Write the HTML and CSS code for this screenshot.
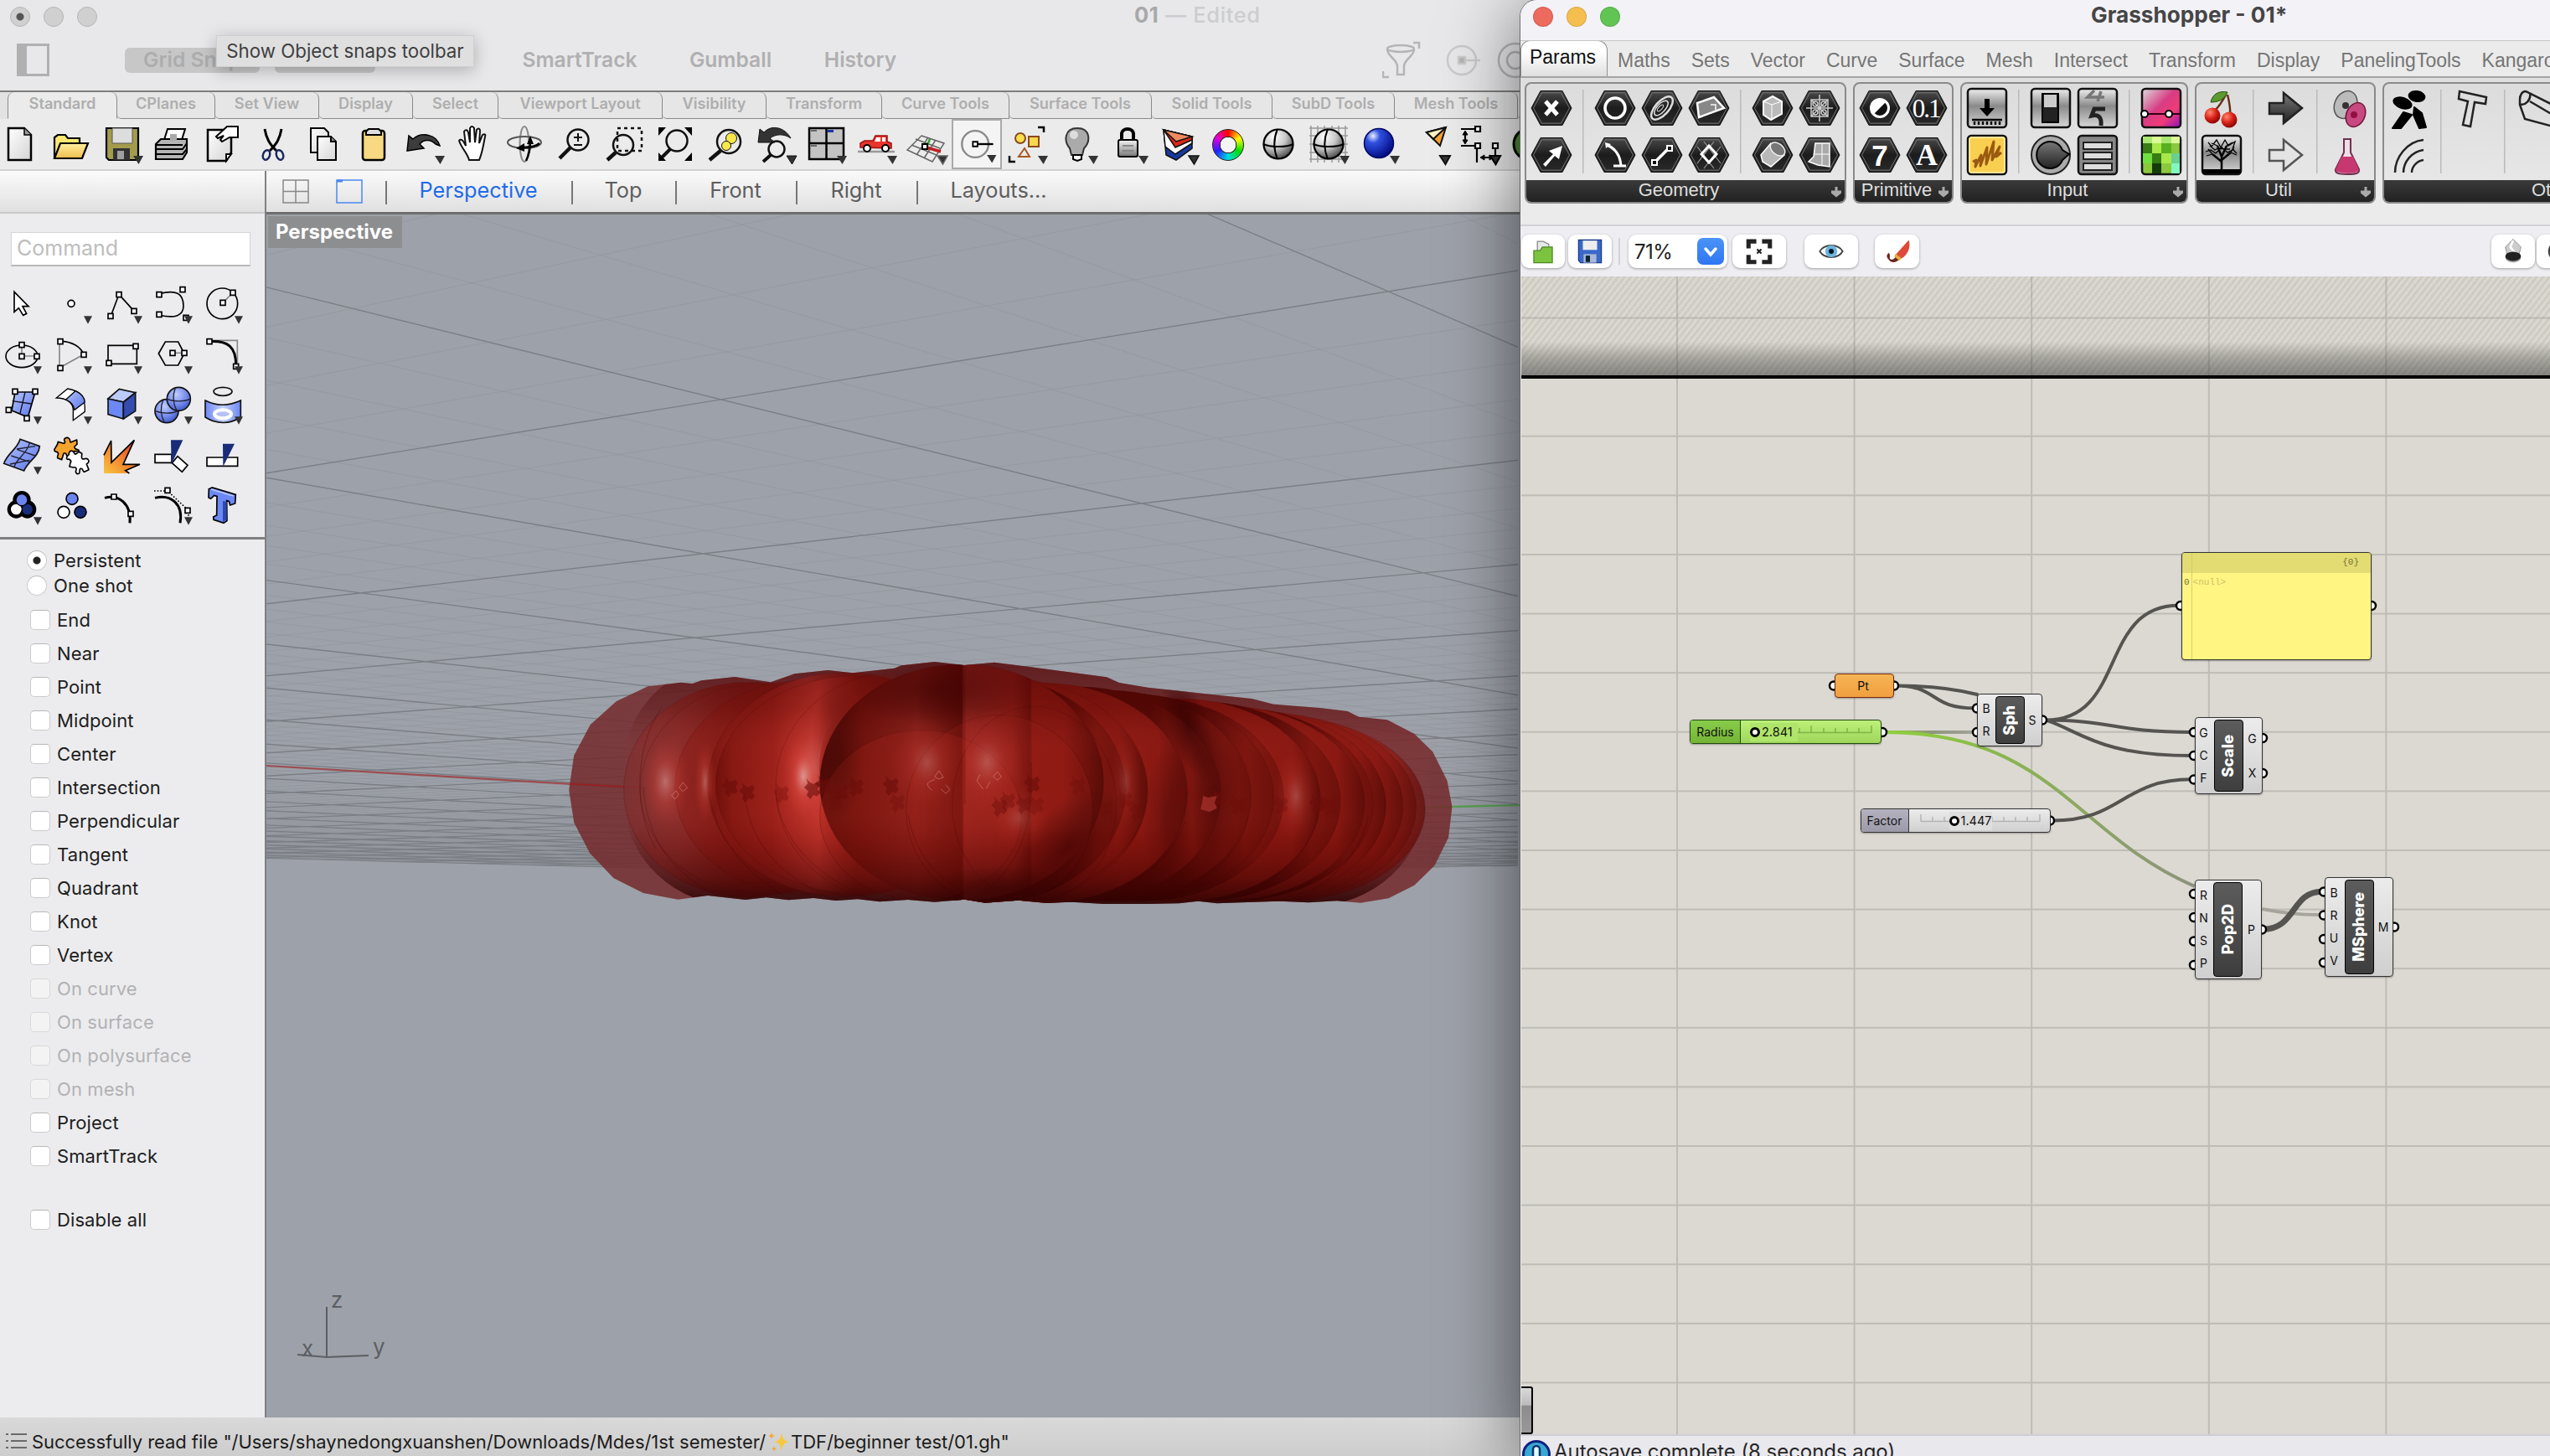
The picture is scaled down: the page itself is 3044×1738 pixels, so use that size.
FILE: index.html
```html
<!DOCTYPE html>
<html lang="en">
<head>
<meta charset="utf-8">
<title>01 — Edited</title>
<link rel="stylesheet" href="styles.css">
</head>
<body>
<svg class="defs" width="0" height="0">
  <defs>
    <linearGradient id="gHex" x1="0" y1="0" x2="0" y2="1"><stop offset="0" stop-color="#4a4a4a"/><stop offset=".5" stop-color="#1c1c1c"/><stop offset="1" stop-color="#2a2a2a"/></linearGradient>
    <linearGradient id="gPaper" x1="0" y1="0" x2="1" y2="1"><stop offset="0" stop-color="#fff"/><stop offset="1" stop-color="#d4d4d4"/></linearGradient>
    <linearGradient id="gSteel" x1="0" y1="0" x2="0" y2="1"><stop offset="0" stop-color="#f4f4f4"/><stop offset="1" stop-color="#777"/></linearGradient>
    <linearGradient id="gGrey" x1="0" y1="0" x2="0" y2="1"><stop offset="0" stop-color="#eee"/><stop offset=".45" stop-color="#8a8a8a"/><stop offset="1" stop-color="#d8d8d8"/></linearGradient>
    <linearGradient id="gDark" x1="0" y1="0" x2="0" y2="1"><stop offset="0" stop-color="#777"/><stop offset="1" stop-color="#222"/></linearGradient>
    <linearGradient id="gGold" x1="0" y1="0" x2="0" y2="1"><stop offset="0" stop-color="#fff0a0"/><stop offset="1" stop-color="#f0bc4c"/></linearGradient>
    <linearGradient id="gBlue" x1="0" y1="0" x2="1" y2="1"><stop offset="0" stop-color="#b4c4fa"/><stop offset="1" stop-color="#5a74ea"/></linearGradient>
    <linearGradient id="gBlue2" x1="0" y1="0" x2="1" y2="0"><stop offset="0" stop-color="#6c88f4"/><stop offset=".5" stop-color="#c4d0fb"/><stop offset="1" stop-color="#6c88f4"/></linearGradient>
    <linearGradient id="gFire" x1="0" y1="1" x2="1" y2="0"><stop offset="0" stop-color="#f9c33c"/><stop offset=".5" stop-color="#f08030"/><stop offset="1" stop-color="#e02818"/></linearGradient>
    <linearGradient id="gPink" x1="0" y1="0" x2="1" y2="1"><stop offset="0" stop-color="#ddd"/><stop offset=".45" stop-color="#d83c84"/><stop offset=".7" stop-color="#f03c78"/><stop offset="1" stop-color="#8a10c0"/></linearGradient>
    <radialGradient id="gBall" cx=".35" cy=".25" r=".8"><stop offset="0" stop-color="#fff"/><stop offset=".5" stop-color="#c8c8c8"/><stop offset="1" stop-color="#444"/></radialGradient>
    <radialGradient id="gBlueBall" cx=".3" cy=".25" r=".8"><stop offset="0" stop-color="#e8f0ff"/><stop offset=".3" stop-color="#3050e0"/><stop offset="1" stop-color="#000a80"/></radialGradient>
    <radialGradient id="gSoftBall" cx=".4" cy=".3" r=".8"><stop offset="0" stop-color="#c0ccfa"/><stop offset=".6" stop-color="#6c84ea"/><stop offset="1" stop-color="#3048b0"/></radialGradient>
    <radialGradient id="gCherry" cx=".35" cy=".3" r=".8"><stop offset="0" stop-color="#ff8870"/><stop offset=".5" stop-color="#d82018"/><stop offset="1" stop-color="#700"/></radialGradient>
    <symbol id="more" viewBox="0 0 60 60"><path d="M43 44h12l-5.500 10z" fill="#333"/></symbol>
    <symbol id="hex" viewBox="0 0 56 56"><path d="M4 28L15 7.500h26L52 28 41 48.500H15z" fill="url(#gHex)" stroke="#111" stroke-width="1"/><path d="M6.500 28L16.500 9.800h23L49.500 28 39.500 46.200h-23z" fill="none" stroke="#777" stroke-width="1"/></symbol>
    <symbol id="plus" viewBox="0 0 14 14"><path d="M5.500 1h3v4.500H13v3L7 13.500 1 8.500v-3h4.500z" fill="#aaa"/></symbol>
  </defs>
</svg>

<main class="rhino">
  <header class="r-title">
    <div class="lights off"><i class="dot"></i><i></i><i></i></div>
    <h1 class="doc"><b>01</b> — Edited</h1>
    <div class="r-tools">
      <svg class="side" viewBox="0 0 40 40"><path d="M1.500 1.500h36v36h-36z" fill="none" stroke="#b0b0b1" stroke-width="3"/><path d="M1 1h11v37H1z" fill="#b0b0b1"/></svg>
      <span class="opt on gs">Grid Snap</span><span class="opt on or">Ortho</span><span class="opt pl">Planar</span><span class="opt st">SmartTrack</span><span class="opt gu">Gumball</span><span class="opt hi">History</span>
      <svg class="filters" viewBox="0 0 180 46" fill="none" stroke="#b5b5b6" stroke-width="2.500"><ellipse cx="22" cy="9" rx="16" ry="4"/><path d="M6 10c0 8 12 12 12 20v10h8V30c0-8 12-12 12-20M37 2h7v7M1 36v7h7"/><g stroke="#cacacb"><circle cx="95" cy="23" r="17"/><path d="M95 23h22"/><path d="M91 19h8v8h-8z" fill="#b5b5b6"/></g><circle cx="159" cy="23" r="20"/><circle cx="159" cy="23" r="10"/></svg>
    </div>
    <div class="tooltip">Show Object snaps toolbar</div>
  </header>

  <nav class="r-tabs">
    <span class="act" style="width:131px">Standard</span><span style="width:117px">CPlanes</span><span style="width:124px">Set View</span><span style="width:112px">Display</span><span style="width:102px">Select</span><span style="width:196px">Viewport Layout</span><span style="width:124px">Visibility</span><span style="width:138px">Transform</span><span style="width:152px">Curve Tools</span><span style="width:170px">Surface Tools</span><span style="width:144px">Solid Tools</span><span style="width:146px">SubD Tools</span><span style="width:147px">Mesh Tools</span><span style="width:147px"></span>
  </nav>

  <div class="r-icons">
    <svg viewBox="0 0 60 60"><path d="M14 11h19l8 8v30H14z" fill="url(#gPaper)" stroke="#000" stroke-width="2.500"/><path d="M33 11v8h8" fill="#999" stroke="#000" stroke-width="1.500"/></svg>
    <svg viewBox="0 0 60 60"><path d="M9 47V22l4-3h9l3 4h14v6" fill="#fbe870" stroke="#000" stroke-width="2.200"/><path d="M9 47l7-18h33l-7 18z" fill="url(#gGold)" stroke="#000" stroke-width="2.200"/></svg>
    <svg viewBox="0 0 60 60"><path d="M11 11h38v38H14l-3-3z" fill="#a39c4c" stroke="#000" stroke-width="2.200"/><path d="M18 11h24v18H18z" fill="#ddd" stroke="#555"/><path d="M19 35h20v14H19z" fill="#333"/><path d="M24 38h8v10h-8z" fill="#a0a0a0"/><use href="#more"/></svg>
    <svg viewBox="0 0 60 60"><path d="M19 28l5-16h21l-5 16" fill="#fff" stroke="#000" stroke-width="2"/><path d="M10 30l6-6h31v16l-5 8H10z" fill="#b5b5b5" stroke="#000" stroke-width="2.200"/><path d="M10 36h32l5-7M10 42h32l5-6M10 31h32" stroke="#000" stroke-width="2" fill="none"/><path d="M27 18h8v8h-8z" fill="#aaa"/></svg>
    <svg viewBox="0 0 60 60"><path d="M12 13h28v27l-6 10H12z" fill="url(#gPaper)" stroke="#000" stroke-width="2.500"/><path d="M40 42l-6 8V42z" fill="#fff" stroke="#000" stroke-width="2"/><path d="M48 9H35l-13 12 2 2 7-3-4 5 2 2 9-5h10z" fill="#fff" stroke="#000" stroke-width="2"/></svg>
    <svg viewBox="0 0 60 60" fill="none"><path d="M20 12c2 12 6 18 14 26M40 12c-2 12-6 18-14 26" stroke="#000" stroke-width="3"/><ellipse cx="22" cy="43" rx="4" ry="6" stroke="#1a2a5c" stroke-width="2.500" transform="rotate(20 22 43)"/><ellipse cx="38" cy="43" rx="4" ry="6" stroke="#1a2a5c" stroke-width="2.500" transform="rotate(-20 38 43)"/></svg>
    <svg viewBox="0 0 60 60" fill="url(#gPaper)" stroke="#000" stroke-width="2"><path d="M15 11h16l5 5v24H15z"/><path d="M23 21h16l6 6v22H23z"/><path d="M39 21v6h6" fill="#888"/></svg>
    <svg viewBox="0 0 60 60"><rect x="17" y="14" width="26" height="35" rx="3" fill="#f8d880" stroke="#000" stroke-width="2.500"/><path d="M21 19v-4l3-3h12l3 3v4z" fill="#ddd" stroke="#000" stroke-width="2"/></svg>
    <svg viewBox="0 0 60 60"><path d="M10 38l2-18 5 4c10-9 28-6 32 8l-5-2c-6-6-14-6-19 0l5 5z" fill="#3c3c3c" stroke="#000" stroke-width="1.500"/><use href="#more"/></svg>
    <svg viewBox="0 0 60 60"><path d="M24 49c-2-8-9-14-12-23 2-3 5-1 8 6l-2-17c2-3 4-2 5 1l2 12V11c2-3 4-2 5 0l1 17 2-15c2-3 4-1 4 1l-1 15 4-10c3-2 4 0 3 2-2 10-3 19-7 28z" fill="#fff" stroke="#111" stroke-width="2"/></svg>
    <svg viewBox="0 0 60 60" fill="none"><ellipse cx="30" cy="30" rx="5.500" ry="21" stroke="#888" stroke-width="2"/><ellipse cx="30" cy="28" rx="20" ry="7" stroke="#555" stroke-width="2"/><path d="M20 35l10-6v10z M33 30l4-10 4 10z" fill="#000"/><path d="M28 34c10 0 16-1 20-5M37 26c0 10-2 18-5 24" stroke="#000" stroke-width="2.500"/></svg>
    <svg viewBox="0 0 60 60" fill="none" stroke="#111"><circle cx="34" cy="25" r="12.500" stroke-width="2.500"/><path d="M25 34L12 47" stroke-width="4.500"/><path d="M29 22h10M34 17v10M29 31h10" stroke-width="2"/></svg>
    <svg viewBox="0 0 60 60" fill="none" stroke="#111"><path d="M21 11h29v27H21z" stroke-width="2.500" stroke-dasharray="4 4"/><circle cx="28" cy="31" r="12" stroke-width="2.500"/><path d="M19 40L9 49" stroke-width="4.500"/></svg>
    <svg viewBox="0 0 60 60" fill="none" stroke="#111"><circle cx="32" cy="26" r="12.500" stroke-width="2.500"/><path d="M24 36L14 46" stroke-width="4"/><path d="M10 10h9l-9 10zM50 10h-9l9 10zM10 50h9l-9-10zM50 50h-9l9-10z" fill="#000" stroke="none"/></svg>
    <svg viewBox="0 0 60 60" fill="none" stroke="#111"><circle cx="34" cy="27" r="14" stroke-width="2.500"/><path d="M24 38L11 49" stroke-width="4.500"/><circle cx="37" cy="23" r="6.500" fill="#f8e84c"/><circle cx="31" cy="32" r="5.500" fill="#f8e84c"/></svg>
    <svg viewBox="0 0 60 60" fill="none" stroke="#111"><path d="M9 28l2-16 5 4c9-10 25-6 32 7-9-6-18-5-25 0l6 5z" fill="#333"/><circle cx="31" cy="36" r="9.500" stroke-width="2.500"/><path d="M24 43l-9 8" stroke-width="4"/><use href="#more"/></svg>
    <svg viewBox="0 0 60 60"><path d="M10 11h41v37H10zM30.500 11v37M10 29h41" fill="#c3c3c3" stroke="#000" stroke-width="2.500"/><path d="M32 13h7v3h-7z" fill="#1838a8"/><path d="M12 13h7v2h-7zM12 31h7v2h-7z" fill="#666"/><use href="#more"/></svg>
    <svg viewBox="0 0 60 60"><path d="M8 39h44" stroke="#999" stroke-width="2.500"/><path d="M11 34v-5l5-3h10l3-6h14v7l5 2v6z" fill="#e8352c" stroke="#a01010" stroke-width="1.500"/><path d="M30 22h5v5h-7zM37 22h4v5h-4z" fill="#fff"/><circle cx="19" cy="35" r="4" fill="#fff" stroke="#000" stroke-width="2"/><circle cx="41" cy="35" r="4" fill="#fff" stroke="#000" stroke-width="2"/><use href="#more"/></svg>
    <svg viewBox="0 0 60 60" fill="none" stroke="#666" stroke-width="1.500"><path d="M24 20l27 9-14 22-30-14zM17 24l29 11M12 31l30 12M32 22L18 43M41 25L27 47"/><path d="M30 34l4-10" stroke="#30a030" stroke-width="2.500"/><path d="M30 34l17 5" stroke="#c02020" stroke-width="3.500"/><path d="M25 30h6v6h-6z" fill="#fff" stroke="#000" stroke-width="2"/><use href="#more"/></svg>
    <svg class="pressed" viewBox="0 0 60 60" fill="none"><circle cx="28" cy="30" r="17" stroke="#888" stroke-width="2.500"/><path d="M31 30h20" stroke="#000" stroke-width="2.500"/><path d="M25 27h6v6h-6z" fill="#fff" stroke="#000" stroke-width="2"/><use href="#more"/></svg>
    <svg viewBox="0 0 60 60" fill="none"><circle cx="22" cy="23" r="6" fill="#f8e04c" stroke="#8a4a20" stroke-width="2"/><path d="M32 21h12v12H32z" fill="#f8d84c" stroke="#8a4a20" stroke-width="2"/><path d="M27 35l6 10H20z" stroke="#a85820" stroke-width="2"/><path d="M43 10h7v6M9 44v7h7" stroke="#000" stroke-width="2.500"/><use href="#more"/></svg>
    <svg viewBox="0 0 60 60"><path d="M30 11c-16 0-16 16-9 24l2 8h13l2-8c8-8 8-24-8-24z" fill="#aaa" stroke="#333" stroke-width="2"/><ellipse cx="26" cy="19" rx="5" ry="5" fill="#ddd"/><path d="M25 43h10v5l-5 2-5-2z" fill="#fff" stroke="#000" stroke-width="2"/><use href="#more"/></svg>
    <svg viewBox="0 0 60 60"><path d="M23 26v-8c0-8 14-8 14 0v8" fill="none" stroke="#000" stroke-width="4"/><rect x="19" y="25" width="23" height="20" rx="2" fill="url(#gSteel)" stroke="#000" stroke-width="2"/><path d="M24 32h13M24 38h13" stroke="#888" stroke-width="2"/><use href="#more"/></svg>
    <svg viewBox="0 0 60 60" stroke="#111" stroke-width="1.500"><path d="M13 13l34 8v14L28 49 16 43z" fill="#1838a0"/><path d="M13 13l34 8v8L27 42l-12-9z" fill="#fff"/><path d="M13 13l34 8v4L27 34z" fill="#d82818"/><path d="M13 13l34 8-19 6z" fill="#f08a60"/><use href="#more"/></svg>
    <span class="wheel"><i></i></span>
    <svg viewBox="0 0 60 60"><circle cx="30" cy="30" r="17.500" fill="url(#gBall)" stroke="#000" stroke-width="2.200"/><path d="M29 12c-5 12-5 24 0 36M12 30c8 4 28 4 36 0" fill="none" stroke="#000" stroke-width="2"/></svg>
    <svg viewBox="0 0 60 60"><path d="M9 8v44M17 8v44M25 8v44M34 8v44M42 8v44M50 8v44M7 11h46M7 20h46M7 30h46M7 40h46M7 48h46" stroke="#999" stroke-width="1.500"/><circle cx="30" cy="30" r="17.500" fill="url(#gBall)" stroke="#000" stroke-width="2.200"/><path d="M29 12c-5 12-5 24 0 36M12 30c8 4 28 4 36 0" fill="none" stroke="#000" stroke-width="2"/><use href="#more"/></svg>
    <svg viewBox="0 0 60 60"><circle cx="30" cy="29" r="17.500" fill="url(#gBlueBall)" stroke="#000860" stroke-width="1.500"/><use href="#more"/></svg>
    <svg viewBox="0 0 60 60" stroke="#111" stroke-width="2"><path d="M27 16l23-6-7 22z" fill="#f8a030"/><path d="M27 16l23-6-15 14z" fill="#fff3c0"/><use href="#more"/></svg>
    <svg viewBox="0 0 60 60" fill="none" stroke="#000" stroke-width="2.200"><path d="M8 12h20M8 32h20M13 16v12M27 36v16M49 36v16M33 46h12"/><path d="M10 19l3-5 3 5zM10 25l3 5 3-5zM36 43l-5 3 5 3zM42 43l5 3-5 3z" fill="#000" stroke-width="1"/><path d="M25 9h6v6h-6zM25 29h6v6h-6zM46 29h6v6h-6z" fill="#fff"/><use href="#more"/></svg>
    <svg viewBox="0 0 60 60"><circle cx="30" cy="30" r="19" fill="#4a8a30" stroke="#000" stroke-width="3"/></svg>
  </div>

  <div class="r-work">
    <aside class="r-left">
      <div class="left-cap"></div>
      <div class="command">Command</div>
      <div class="palette">
        <svg viewBox="-12 248 180 180"><path d="M51 297v72l16-14 16 26 12-6-14-26h21z" fill="#fff" stroke="#000" stroke-width="5"/></svg>
        <svg viewBox="168 248 180 180"><circle cx="255" cy="339" r="12" fill="#fff" stroke="#000" stroke-width="5"/><path d="M300 384h30l-15 28z" fill="#333"/></svg>
        <svg viewBox="348 248 180 180" fill="#fff" stroke="#000" stroke-width="5"><path d="M397 384l29-78 54 60" fill="none"/><path d="M387 375h18v18h-18zM417 298h18v18h-18zM471 357h18v18h-18z"/><path d="M480 384h30l-15 28z" fill="#333" stroke="none"/></svg>
        <svg viewBox="528 248 180 180" fill="#fff" stroke="#000" stroke-width="5"><path d="M570 304c60-16 87-2 87 44 0 34-30 46-87 32" fill="none"/><path d="M561 298h18v18h-18zM561 369h18v18h-18zM645 280h18v18h-18zM657 381h18v18h-18z"/><path d="M660 384h30l-15 28z" fill="#333" stroke="none"/></svg>
        <svg viewBox="708 248 180 180" fill="#fff" stroke="#000" stroke-width="5"><circle cx="796" cy="339" r="55" fill="none"/><path d="M798 336l36-36" stroke="#888"/><path d="M789 327h18v18h-18zM825 291h18v18h-18z"/><path d="M840 384h30l-15 28z" fill="#333" stroke="none"/></svg>

        <svg viewBox="-12 428 180 180" fill="#fff" stroke="#000" stroke-width="5"><ellipse cx="78" cy="528" rx="57" ry="40" fill="none"/><path d="M78 487v40h54" fill="none" stroke="#888"/><path d="M69 478h18v18H69zM69 519h18v18H69zM123 519h18v18h-18z"/><path d="M120 564h30l-15 28z" fill="#333" stroke="none"/></svg>
        <svg viewBox="168 428 180 180" fill="#fff" stroke="#000" stroke-width="5"><path d="M300 521l-87 48v-94" fill="none" stroke="#888"/><path d="M216 474c40 0 74 20 84 48" fill="none"/><path d="M207 466h18v18h-18zM291 513h18v18h-18zM207 561h18v18h-18z"/><path d="M300 564h30l-15 28z" fill="#333" stroke="none"/></svg>
        <svg viewBox="348 428 180 180" fill="#fff" stroke="#000" stroke-width="5"><path d="M387 489h103v66H387z" fill="none"/><path d="M477 483h18v18h-18zM381 543h18v18h-18z"/><path d="M480 564h30l-15 28z" fill="#333" stroke="none"/></svg>
        <svg viewBox="528 428 180 180" fill="#fff" stroke="#000" stroke-width="5"><path d="M568 518l24-42h46l22 42-22 42h-46z" fill="none"/><path d="M618 516h42" stroke="#888"/><path d="M609 507h18v18h-18zM651 507h18v18h-18z"/><path d="M660 564h30l-15 28z" fill="#333" stroke="none"/></svg>
        <svg viewBox="708 428 180 180" fill="#fff" stroke="#000" stroke-width="5"><path d="M750 471h100v80" fill="none" stroke="#888"/><path d="M750 475c66-4 96 18 95 88" fill="none" stroke-width="9"/><path d="M741 466h18v18h-18zM836 555h18v18h-18z"/><path d="M840 564h30l-15 28z" fill="#333" stroke="none"/></svg>

        <svg viewBox="-12 608 180 180" fill="#fff" stroke="#000" stroke-width="5"><path d="M54 656h72l-26 90-58-24z" fill="url(#gBlue)"/><path d="M90 656L72 732M44 688l68 10" stroke="#112" stroke-width="4"/><path d="M45 645h18v18H45zM117 645h18v18h-18zM22 711h18v18H22zM87 741h18v18H87z"/><path d="M120 744h30l-15 28z" fill="#333" stroke="none"/></svg>
        <svg viewBox="168 608 180 180" fill="#fff" stroke="#000" stroke-width="4"><path d="M202 677l40-33c46 8 64 26 62 82l-42 31v-38c0-22-22-42-60-42z"/><path d="M236 683l34-31c18 8 32 20 34 40l-37 28c-4-20-14-30-31-37z" fill="url(#gBlue)"/><path d="M300 744h30l-15 28z" fill="#333" stroke="none"/></svg>
        <svg viewBox="348 608 180 180" stroke="#111" stroke-width="5"><path d="M387 680l40-35 58 13-43 34z" fill="#bccaf8"/><path d="M387 680l55 12v60l-55-16z" fill="#6c88f4"/><path d="M442 692l43-34v66l-43 28z" fill="#344cb0"/><path d="M480 744h30l-15 28z" fill="#333" stroke="none"/></svg>
        <svg viewBox="528 608 180 180" stroke="#111" stroke-width="5"><circle cx="597" cy="724" r="42" fill="url(#gSoftBall)"/><path d="M584 684c-10 26-8 56 4 80M556 724c24 10 60 10 82 0" fill="none" stroke="#223" stroke-width="4"/><circle cx="640" cy="681" r="42" fill="url(#gSoftBall)"/><path d="M628 641c-10 26-8 56 4 80M598 681c24 10 60 10 84 0" fill="none" stroke="#223" stroke-width="4"/><path d="M660 744h30l-15 28z" fill="#333" stroke="none"/></svg>
        <svg viewBox="708 608 180 180" stroke="#111" stroke-width="5"><ellipse cx="798" cy="654" rx="33" ry="15" fill="none"/><path d="M735 686c40 20 86 20 127 0v60c-40 26-86 26-127 0z" fill="url(#gBlue2)"/><ellipse cx="798" cy="735" rx="30" ry="15" fill="#b4c2f6" stroke="#fff" stroke-width="12"/><path d="M840 744h30l-15 28z" fill="#333" stroke="none"/></svg>

        <svg viewBox="-12 788 180 180" stroke="#111" stroke-width="5"><path d="M72 825l70 25c-4 40-40 50-56 88l-72-26c12-38 48-50 58-87z" fill="url(#gBlue)"/><path d="M62 862l64 22M40 884l66 22M106 838c-8 40-44 50-56 88M126 850l-66 10M106 900l-70 14" fill="none" stroke="#223" stroke-width="4"/><path d="M120 924h30l-15 28z" fill="#333" stroke="none"/></svg>
        <svg viewBox="168 788 180 180" stroke="#000" stroke-width="5" stroke-linejoin="round"><path d="M208 834l17 5c7 2 10-3 6-8-5-9 8-15 16-9 7 5 1 11 6 14l22-9 1 16c-8 5-12 11-7 15 6 6 12 1 14 8-12 4-24-1-28 8-4 7 4 10 0 16-8 6-16-4-18-12-4-6-9-4-10 1l-6 19-15-6c-3-7 6-12 2-18-4-7-14-2-13-10-2-8 12-14 13-30z" fill="#f4a32c"/><path d="M247 880c-2-10 6-16 14-12 6 3 4 12 10 10l12-8 10 6c2 6-4 12 1 18 6 6 12-4 20 2 8 8 2 14-4 18l8 20-16 8c-8-2-4-14-13-12-8 3 0 12-6 18-10 4-14-6-10-14 2-8-4-10-10-8l-14-3 3-14c6-6-3-14-9-12-8 0-4-12 4-17z" fill="#fff"/></svg>
        <svg viewBox="348 788 180 180"><path d="M372 947V882l26-54 2 80 80-80-38 88 58 0-48 22 12 9z" fill="url(#gFire)"/><path d="M372 882l26-52 1 78 82-80-40 87 60 0-52 22 14 10" fill="none" stroke="#000" stroke-width="5"/></svg>
        <svg viewBox="528 788 180 180"><path d="M555 879h60v30h-60zM636 886l36 32-20 24-36-32z" fill="#fff" stroke="#000" stroke-width="5"/><path d="M612 828h43l-41 86z" fill="#182c78"/></svg>
        <svg viewBox="708 788 180 180"><path d="M741 890h110v31H741z" fill="#fff" stroke="#000" stroke-width="5"/><path d="M798 841h42l-41 82z" fill="#182c78"/></svg>

        <svg viewBox="-12 968 180 180" stroke="#000"><g stroke-width="18"><circle cx="78" cy="1042" r="23"/><circle cx="58" cy="1076" r="23"/><circle cx="98" cy="1076" r="23"/></g><g stroke-width="4"><circle cx="98" cy="1076" r="21" fill="#182c78"/><circle cx="58" cy="1076" r="21" fill="#fff"/><circle cx="78" cy="1042" r="21" fill="#6c84ee"/></g><path d="M120 1104h30l-15 28z" fill="#333" stroke="none"/></svg>
        <svg viewBox="168 968 180 180" stroke="#000" stroke-width="5"><circle cx="258" cy="1038" r="21" fill="#6c84ee"/><circle cx="228" cy="1086" r="21" fill="#fff"/><circle cx="288" cy="1086" r="21" fill="#182c78"/></svg>
        <svg viewBox="348 968 180 180" fill="none" stroke="#000"><path d="M375 1035c50-14 96 20 90 90" stroke-width="9"/><path d="M399 1022h18v18h-18zM459 1083h18v18h-18z" fill="#fff" stroke-width="5"/></svg>
        <svg viewBox="528 968 180 180" fill="none" stroke="#000"><path d="M555 1035c56-14 102 20 90 90" stroke-width="9"/><path d="M552 1010h48l75 70v30" stroke-width="5" stroke-dasharray="5 6"/><path d="M591 999h18v18h-18zM663 1071h18v18h-18z" fill="#fff" stroke-width="5"/><path d="M660 1104h30l-15 28z" fill="#333" stroke="none"/></svg>
        <svg viewBox="708 968 180 180" stroke="#000" stroke-width="5"><path d="M748 1003l12-5 84 25-2 32-18 6-4-14-8-2 1 72-12 8-36-12-1-10 12-6 1-68-10-3-12 12-8-4z" fill="#6c88f4"/><path d="M756 1004l80 24" stroke="#b8c8fa" stroke-width="5" fill="none"/><path d="M798 1046l14 3v64l-14 8z" fill="#2c48b0" stroke="none"/></svg>
      </div>
      <section class="snaps">
        <label class="radio sel"><i></i>Persistent</label>
        <label class="radio"><i></i>One shot</label>
        <div class="checks">
          <label><i></i>End</label><label><i></i>Near</label><label><i></i>Point</label><label><i></i>Midpoint</label><label><i></i>Center</label><label><i></i>Intersection</label><label><i></i>Perpendicular</label><label><i></i>Tangent</label><label><i></i>Quadrant</label><label><i></i>Knot</label><label><i></i>Vertex</label>
          <label class="dim"><i></i>On curve</label><label class="dim"><i></i>On surface</label><label class="dim"><i></i>On polysurface</label><label class="dim"><i></i>On mesh</label>
          <label><i></i>Project</label><label><i></i>SmartTrack</label>
          <label class="all"><i></i>Disable all</label>
        </div>
      </section>
    </aside>

    <section class="r-view">
      <div class="v-bar">
        <svg class="v4" viewBox="0 0 32 30" fill="none" stroke="#888" stroke-width="1.500"><path d="M1 1h30v27H1zM16 1v27M1 14.500h30"/></svg>
        <svg class="v1" viewBox="0 0 32 30" fill="none" stroke="#4a88f0" stroke-width="1.500"><path d="M1 1h30v27H1z"/><path d="M1 2h7" stroke-width="3"/></svg>
        <hr><span class="cur">Perspective</span><hr><span>Top</span><hr><span>Front</span><hr><span>Right</span><hr><span>Layouts...</span>
      </div>
      <div class="scene">
        <svg class="scene-svg" viewBox="318 256 1500 1436">
          <defs>
            <clipPath id="ground"><path d="M318 200H1818V1034L1084 1044.600 318 1025z"/></clipPath>
            <clipPath id="hull"><path d="M52 548L60 425 86 315 127 232 177 178 230 164 248 168 262 157 315 144 372 163 410 133 463 120 502 130 568 113 580 103 632 90 679 102 727 92 780 107 845 127 905 145 925 165 970 182 1020 194 1075 208 1135 222 1170 242 1243 255 1287 267 1305 287 1350 298 1393 348 1422 412 1445 515 1453 610 1447 720 1425 820 1393 890 1352 937 1308 953 1270 946 1225 952 1180 947 1080 955 1050 947 1020 955 970 957 900 957 850 950 810 954 765 944 712 953 680 941 632 950 590 942 545 949 510 940 475 945 440 936 400 943 365 934 332 942 272 927 225 941 170 918 123 865 85 775 60 665z"/></clipPath>
            <linearGradient id="sR"><stop offset="0" stop-color="#7c150e"/><stop offset=".78" stop-color="#8e1a12"/><stop offset=".9" stop-color="#8a1811"/><stop offset="1" stop-color="#5c0c07"/></linearGradient>
            <linearGradient id="sR2"><stop offset="0" stop-color="#5a0c07"/><stop offset=".75" stop-color="#560a06"/><stop offset=".9" stop-color="#7c150e"/><stop offset="1" stop-color="#6a0f0a"/></linearGradient>
            <linearGradient id="sL"><stop offset="0" stop-color="#6e0f0a"/><stop offset=".06" stop-color="#861812"/><stop offset=".2" stop-color="#9c2019"/><stop offset=".36" stop-color="#c8382f"/><stop offset=".5" stop-color="#8c1a13"/></linearGradient>
            <linearGradient id="sLL"><stop offset="0" stop-color="#7a3030"/><stop offset=".15" stop-color="#8f302d"/><stop offset=".4" stop-color="#821a15"/></linearGradient>
            <linearGradient id="sM"><stop offset="0" stop-color="#4e0905"/><stop offset=".15" stop-color="#6c110b"/><stop offset=".34" stop-color="#86201a"/><stop offset=".5" stop-color="#5c0c07"/><stop offset=".51" stop-color="#9c2a24"/><stop offset=".68" stop-color="#8e1e17"/><stop offset=".74" stop-color="#6e110b"/><stop offset=".75" stop-color="#8c1a12"/><stop offset=".86" stop-color="#8a1811"/><stop offset="1" stop-color="#560a06"/></linearGradient>
            <linearGradient id="sV" x1="0" y1="0" x2="0" y2="1"><stop offset="0" stop-color="#400" stop-opacity=".5"/><stop offset=".2" stop-color="#400" stop-opacity=".25"/><stop offset=".4" stop-color="#a33" stop-opacity=".04"/><stop offset=".6" stop-color="#a33" stop-opacity=".04"/><stop offset=".72" stop-color="#500" stop-opacity=".15"/><stop offset=".88" stop-color="#380000" stop-opacity=".5"/><stop offset="1" stop-color="#200" stop-opacity=".85"/></linearGradient>
            <radialGradient id="glow"><stop offset="0" stop-color="#e8aca8" stop-opacity=".8"/><stop offset=".45" stop-color="#d84a42" stop-opacity=".5"/><stop offset="1" stop-color="#c03028" stop-opacity="0"/></radialGradient>
            <radialGradient id="shade"><stop offset="0" stop-color="#2a0000" stop-opacity=".75"/><stop offset="1" stop-color="#2a0000" stop-opacity="0"/></radialGradient>
            <clipPath id="lobeL"><path d="M449 480C449 340 480 230 530 170V100H280V950H560V880C480 800 452 640 449 480z"/></clipPath>
            <clipPath id="lobeR"><path d="M680 100H900V960H680z"/></clipPath>
          </defs>
          <g clip-path="url(#ground)" fill="none">
            <path id="minor" stroke="#8f949b" stroke-width="1" stroke-opacity=".55"/>
            <path id="major" stroke="#7b7f85" stroke-width="1.400"/>
          </g>
          <path d="M318 914L1334 975" stroke="#9c4c50" stroke-width="2.200"/>
          <path d="M1334 973L1818 961" stroke="#58a050" stroke-width="2.200"/>
          <g transform="translate(640 760) scale(.7526 .3333)">
            <g clip-path="url(#hull)">
              <path d="M0 50h1500v950H0z" fill="#742a2c" fill-opacity=".86"/>
              <path d="M0 521l270 30" stroke="#a81c1c" stroke-width="3"/>
              <g stroke="#4a0a0a" stroke-opacity=".25" stroke-width="1.500">
                <ellipse cx="1180" cy="618" rx="230" ry="332" fill="url(#sR)" fill-opacity=".75"/>
                <ellipse cx="1166" cy="612" rx="230" ry="336" fill="url(#sR)" fill-opacity=".7"/>
                <ellipse cx="1145" cy="608" rx="230" ry="340" fill="url(#sR)" fill-opacity=".8"/>
                <ellipse cx="1120" cy="604" rx="228" ry="345" fill="url(#sR)"/>
                <ellipse cx="1100" cy="600" rx="228" ry="348" fill="url(#sR2)"/>
                <ellipse cx="1086" cy="596" rx="228" ry="350" fill="url(#sR)"/>
                <ellipse cx="1050" cy="590" rx="226" ry="358" fill="url(#sR2)"/>
                <ellipse cx="1018" cy="585" rx="226" ry="364" fill="url(#sR)"/>
                <ellipse cx="960" cy="580" rx="226" ry="368" fill="url(#sR2)" fill-opacity=".8"/>
                <ellipse cx="942" cy="576" rx="228" ry="372" fill="url(#sR2)"/>
                <ellipse cx="908" cy="570" rx="226" ry="378" fill="url(#sR2)"/>
                <ellipse cx="860" cy="565" rx="226" ry="386" fill="url(#sR2)"/>
                <ellipse cx="805" cy="560" rx="228" ry="394" fill="url(#sR)"/>
                <ellipse cx="740" cy="552" rx="230" ry="404" fill="url(#sR)"/>
                <ellipse cx="710" cy="548" rx="225" ry="408" fill="url(#sR2)"/>
                <ellipse cx="335" cy="548" rx="196" ry="385" fill="url(#sLL)" fill-opacity=".8"/>
                <ellipse cx="365" cy="545" rx="200" ry="380" fill="url(#sLL)" fill-opacity=".6"/>
                <ellipse cx="430" cy="540" rx="210" ry="385" fill="#8c1812" fill-opacity=".45"/>
                <ellipse cx="490" cy="530" rx="218" ry="402" fill="url(#sL)" fill-opacity=".7"/>
                <ellipse cx="510" cy="530" rx="225" ry="390" fill="url(#sL)"/>
                <ellipse cx="565" cy="538" rx="185" ry="405" fill="#b02a22" fill-opacity=".18"/>
              </g>
              <g clip-path="url(#lobeL)">
                <ellipse cx="440" cy="470" rx="62" ry="270" fill="url(#glow)" opacity=".55"/>
                <ellipse cx="424" cy="500" rx="34" ry="160" fill="url(#glow)"/>
              </g>
              <g stroke="#3a0606" stroke-opacity=".25" stroke-width="1.500">
                <ellipse cx="675" cy="522" rx="225" ry="424" fill="url(#sM)"/>
                <ellipse cx="610" cy="640" rx="160" ry="305" fill="#a8241a" fill-opacity=".3"/>
                <ellipse cx="735" cy="620" rx="148" ry="340" fill="#9a1e16" fill-opacity=".25"/>
                <ellipse cx="790" cy="600" rx="130" ry="350" fill="none"/>
              </g>
              <g fill="none" stroke="#3c0404" stroke-opacity=".28" stroke-width="1.500"><path d="M170 540c6 180 40 290 110 380M200 250C160 380 150 600 190 760M275 560c10 170 60 290 120 370M330 560c10 190 60 300 140 380M380 560c10 190 70 300 150 380M590 640c12 140 40 210 90 280M680 100v500M785 450c4 200-10 330-60 440M960 660c-20 120-70 200-140 280M1030 660c-20 120-60 200-130 290M1130 640c-10 130-60 230-140 300M1240 640c-10 130-60 220-130 300M1320 640c-10 130-50 220-110 300"/></g>
              <ellipse cx="1035" cy="320" rx="34" ry="200" fill="url(#shade)" transform="rotate(-8 1035 320)"/>
              <ellipse cx="1075" cy="560" rx="40" ry="300" fill="url(#shade)" opacity=".55"/>
              <ellipse cx="840" cy="760" rx="70" ry="230" fill="url(#shade)" opacity=".75" transform="rotate(14 840 760)"/>
              <ellipse cx="740" cy="900" rx="120" ry="80" fill="url(#shade)" opacity=".6"/>
              <ellipse cx="640" cy="190" rx="140" ry="130" fill="url(#shade)" opacity=".65"/>
              <ellipse cx="478" cy="400" rx="42" ry="260" fill="url(#shade)" opacity=".5"/>
              <ellipse cx="1000" cy="640" rx="40" ry="250" fill="url(#shade)" opacity=".4"/>
              <ellipse cx="205" cy="520" rx="40" ry="170" fill="url(#glow)" opacity=".65"/>
              <ellipse cx="268" cy="520" rx="18" ry="150" fill="url(#glow)" opacity=".55"/>
              <ellipse cx="620" cy="450" rx="55" ry="170" fill="url(#glow)" opacity=".4"/>
              <g clip-path="url(#lobeR)"><ellipse cx="715" cy="450" rx="60" ry="180" fill="url(#glow)" opacity=".45"/></g>
              <ellipse cx="765" cy="650" rx="50" ry="120" fill="url(#glow)" opacity=".3"/>
              <ellipse cx="1205" cy="570" rx="36" ry="170" fill="url(#glow)" opacity=".4"/>
              <ellipse cx="935" cy="520" rx="26" ry="170" fill="url(#glow)" opacity=".28"/>
              <rect x="140" y="80" width="1270" height="885" rx="180" ry="380" fill="url(#sV)"/>
              <g fill="#6a0d0a" fill-opacity=".6"><path id="sp" d="M-8-34l5 14 6 6 6-10 4 14-4 14 4 14-5 12-5-6-5 16-6-14 3-14-7-14 6-14z" transform="translate(562 530)"/><use href="#sp" x="-56" y="4"/><use href="#sp" x="-80" y="22"/><use href="#sp" x="-107" y="0"/><use href="#sp" x="-125" y="12"/><use href="#sp" x="-228" y="24"/><use href="#sp" x="-255" y="4"/><use href="#sp" x="-174" y="28" opacity=".5"/><use href="#sp" x="-88" y="60" opacity=".4"/><use href="#sp" x="10" y="60" opacity=".5"/><use href="#sp" x="224" y="-6"/><use href="#sp" x="185" y="55" opacity=".6"/><use href="#sp" x="172" y="76" opacity=".7"/><use href="#sp" x="210" y="66" opacity=".6"/><use href="#sp" x="230" y="70" opacity=".5"/><use href="#sp" x="296" y="0" opacity=".5"/><use href="#sp" x="340" y="80" opacity=".5"/><use href="#sp" x="370" y="50" opacity=".5"/><use href="#sp" x="390" y="90" opacity=".5"/><use href="#sp" x="454" y="36"/><use href="#sp" x="518" y="44"/><use href="#sp" x="550" y="70" opacity=".6"/><use href="#sp" x="618" y="68" opacity=".5"/><use href="#sp" x="676" y="66"/><use href="#sp" x="696" y="76" opacity=".6"/></g>
              <path d="M1058 570l8 6 14-6-4 24 4 20-12 14-14-10 2-20z" fill="#b83a34" fill-opacity=".6"/>
              <g fill="none" stroke="#e8b0ac" stroke-opacity=".6" stroke-width="1.300"><path d="M233 522l7 20-8 12-5-14zM222 552l4 14-6 16-5-14zM639 480l7 24-8 6-6-8zM632 512c-14 10-14 20-4 38M650 530l6 18-6 14-8-16M704 494l-5 22 10 30M732 484l6 18-7 12-6-14zM720 520l-6 24"/></g>
            </g>
          </g>
          <g stroke="#5c5f63" stroke-width="2" fill="none"><path d="M390 1560v59M355 1617l35 3 50-2"/></g>
          <g class="axis"><text x="395" y="1561">z</text><text x="360" y="1619">x</text><text x="445" y="1617">y</text></g>
        </svg>
        <span class="v-label">Perspective</span>
      </div>
    </section>
  </div>

  <footer class="r-status">
    <svg viewBox="0 0 28 24" stroke="#6a6a6a" stroke-width="2"><path d="M7 3h19M7 11h19M7 19h19M1 3h3M1 11h3M1 19h3"/></svg>
    <span>Successfully read file "/Users/shaynedongxuanshen/Downloads/Mdes/1st semester/</span>
    <svg class="spark" viewBox="0 0 28 28"><path d="M17 3c1 7 3 10 9 11-6 1-8 4-9 11-1-7-3-10-9-11 6-1 8-4 9-11z" fill="#f6c840"/><path d="M5 2c0 3 1 4 4 5-3 1-4 2-4 5 0-3-1-4-4-5 3-1 4-2 4-5zM8 18c0 3 1 4 3 4-2 1-3 2-3 5 0-3-1-4-3-5 2 0 3-1 3-4z" fill="#f0a838"/></svg>
    <span class="tdf">TDF/beginner test/01.gh"</span>
  </footer>
</main>

<section class="gh">
  <header class="g-title">
    <div class="lights"><i class="red"></i><i class="yel"></i><i class="grn"></i></div>
    <h2>Grasshopper - 01*</h2>
  </header>
  <nav class="g-tabs"><b>Params</b><span>Maths</span><span>Sets</span><span>Vector</span><span>Curve</span><span>Surface</span><span>Mesh</span><span>Intersect</span><span>Transform</span><span>Display</span><span>PanelingTools</span><span>Kangaroo</span></nav>
  <div class="g-ribbon">
    <div class="grp">
      <div class="cells">
        <div class="c2"><svg viewBox="0 0 56 56"><use href="#hex"/><path d="M21 20l14 16M35 20L21 36" stroke="#fff" stroke-width="5"/></svg><svg viewBox="0 0 56 56"><use href="#hex"/><path d="M18 39L30 27l-5-4 16-6-4 16-5-4-11 13z" fill="#fff"/></svg></div><hr>
        <div class="c2"><svg viewBox="0 0 56 56"><use href="#hex"/><circle cx="28" cy="28" r="12" fill="none" stroke="#fff" stroke-width="3.500"/></svg><svg viewBox="0 0 56 56"><use href="#hex"/><path d="M18 16c10 4 16 12 17 25M26 41h15" fill="none" stroke="#fff" stroke-width="3"/><path d="M16 13l7 2-6 5z" fill="#fff"/></svg></div>
        <div class="c2"><svg viewBox="0 0 56 56" fill="none" stroke="#ddd"><use href="#hex"/><ellipse cx="28" cy="28" rx="17" ry="8" transform="rotate(-48 28 28)" stroke-width="2.500"/><ellipse cx="27" cy="28" rx="11" ry="5" transform="rotate(-48 27 28)" stroke-width="1.500"/><ellipse cx="26" cy="28" rx="5" ry="2" transform="rotate(-48 26 28)"/></svg><svg viewBox="0 0 56 56" fill="#111" stroke="#fff" stroke-width="2"><use href="#hex"/><path d="M20 36l16-16" stroke-width="3.500"/><path d="M16 34h6v6h-6zM34 17h6v6h-6z"/></svg></div>
        <div class="c2"><svg viewBox="0 0 56 56"><use href="#hex"/><path d="M14 22l20-7 12 13-30 11z" fill="#888" stroke="#fff" stroke-width="2.500"/><path d="M30 24h6v6" fill="none" stroke="#ddd" stroke-width="2"/></svg><svg viewBox="0 0 56 56" fill="none" stroke="#999" stroke-width="1.200"><use href="#hex"/><path d="M14 38l20-26M22 12l20 26M14 18l20 26M42 18L22 44"/><path d="M28 17l9 10-9 10-9-10z" stroke="#fff" stroke-width="3"/></svg></div><hr>
        <div class="c2"><svg viewBox="0 0 56 56"><use href="#hex"/><path d="M17 20l11-6 11 6v15l-13 7-9-6z" fill="#bbb" stroke="#fff" stroke-width="2"/><path d="M17 20l10 4v17M27 24l12-4" stroke="#fff" fill="none"/></svg><svg viewBox="0 0 56 56"><use href="#hex"/><path d="M26 14l-12 14 2 8 10 6 16-14z" fill="#b8b8b8" stroke="#fff" stroke-width="1.500"/><ellipse cx="34" cy="21" rx="10" ry="6.500" transform="rotate(38 34 21)" fill="#777" stroke="#eee" stroke-width="1.500"/></svg></div>
        <div class="c2"><svg viewBox="0 0 56 56" fill="none" stroke="#ccc" stroke-width="1.500"><use href="#hex"/><path d="M18 18h20v20H18zM28 12v32M12 28h32M18 18l20 20M38 18L18 38"/><circle cx="23" cy="23" r="3"/><circle cx="33" cy="23" r="3"/><circle cx="23" cy="33" r="3"/><circle cx="33" cy="33" r="3"/></svg><svg viewBox="0 0 56 56"><use href="#hex"/><path d="M23 14h17v28l-14-2-11-4 6-6z" fill="#aaa" stroke="#fff" stroke-width="1.500"/><path d="M31 14v26M22 27h18" stroke="#fff"/></svg></div>
      </div>
      <div class="cap">Geometry<svg class="pl"><use href="#plus"/></svg></div>
    </div>
    <div class="grp">
      <div class="cells">
        <div class="c2"><svg viewBox="0 0 56 56"><use href="#hex"/><circle cx="28" cy="28" r="10.500" fill="#111" stroke="#fff" stroke-width="3"/><path d="M36 20A11 11 0 1 0 20 36z" fill="#fff"/></svg><svg viewBox="0 0 56 56"><use href="#hex"/><text x="28" y="41" class="gt">7</text></svg></div>
        <div class="c2"><svg viewBox="0 0 56 56"><use href="#hex"/><text x="27" y="39" class="gt sm">0.1</text></svg><svg viewBox="0 0 56 56"><use href="#hex"/><text x="28" y="40" class="gt se">A</text></svg></div>
      </div>
      <div class="cap">Primitive<svg class="pl"><use href="#plus"/></svg></div>
    </div>
    <div class="grp">
      <div class="cells">
        <div class="c2"><svg viewBox="0 0 56 56"><rect x="5" y="5" width="46" height="46" rx="4" fill="url(#gGrey)" stroke="#111" stroke-width="2.500"/><path d="M25 17h6v11h6l-9 10-9-10h6z"/><path d="M10 42h36M13 44v4M18 44v4M23 44v4M28 44v4M33 44v4M38 44v4M43 44v4" stroke="#000" stroke-width="2.500"/></svg><svg viewBox="0 0 56 56"><rect x="5" y="5" width="46" height="46" rx="4" fill="#f9cf50" stroke="#111" stroke-width="2.500"/><rect x="7" y="7" width="42" height="42" rx="3" fill="none" stroke="#fff3b0" stroke-width="1.500"/><path d="M11 36l4-2-1 8 7-14-1 13 8-22-1 20 9-27-2 22 9-16-4 12 6-5" fill="none" stroke="#9a5a10" stroke-width="3" stroke-linejoin="round"/></svg></div><hr>
        <div class="c2"><svg viewBox="0 0 56 56"><rect x="5" y="5" width="46" height="46" rx="4" fill="url(#gGrey)" stroke="#111" stroke-width="2.500"/><path d="M18 11h19v34H18z" fill="#222" stroke="#000" stroke-width="2"/><path d="M20 12h15v15H20z" fill="#ccc"/></svg><svg viewBox="0 0 56 56"><circle cx="28" cy="28" r="23" fill="#aaa" stroke="#222" stroke-width="2"/><path d="M50 27l-8-5a16 16 0 1 0 0 12z" fill="url(#gDark)" stroke="#000" stroke-width="2"/></svg></div>
        <div class="c2"><svg viewBox="0 0 56 56"><rect x="5" y="5" width="46" height="46" rx="4" fill="url(#gGrey)" stroke="#111" stroke-width="2.500"/><path d="M24 7l-8 8h20M32 8l-4 12" stroke="#777" stroke-width="3.500" fill="none"/><path d="M37 29H24l-3 8c8-2 12 2 11 12" stroke="#222" stroke-width="5" fill="none"/></svg><svg viewBox="0 0 56 56"><rect x="5" y="5" width="46" height="46" rx="4" fill="#888" stroke="#111" stroke-width="2.500"/><path d="M11 13h34v8H11zM11 25h34v8H11zM11 38h34v8H11z" fill="#ddd" stroke="#222" stroke-width="2"/></svg></div><hr>
        <div class="c2"><svg viewBox="0 0 56 56"><rect x="5" y="5" width="46" height="46" rx="4" fill="url(#gPink)" stroke="#111" stroke-width="2.500"/><path d="M6 35h44" stroke="#301" stroke-width="2"/><circle cx="8" cy="35" r="4" fill="#fff" stroke="#000" stroke-width="2"/><circle cx="37" cy="35" r="4" fill="#fff" stroke="#000" stroke-width="2"/></svg><svg viewBox="0 0 56 56"><rect x="5" y="5" width="46" height="46" rx="4" fill="#8cc83c" stroke="#111" stroke-width="2.500"/><path d="M6 6h11v8H6zM28 6h12v8H28z" fill="#a8e870"/><path d="M17 6h11v8H17zM40 6h10v8H40z" fill="#dcfa98"/><path d="M17 14h11v12H17zM28 26h12v12H28z" fill="#a8e848"/><path d="M28 14h12v12H28z" fill="#58b020"/><path d="M6 14h11v12H6zM17 26h11v12H17z" fill="#387c14"/><path d="M6 26h11v12H6z" fill="#70e040"/><path d="M17 38h11v12H17z" fill="#143c08"/><path d="M40 26h10v12H40z" fill="#68d090"/><path d="M40 38h10v12H40z" fill="#80f8c0"/></svg></div>
      </div>
      <div class="cap">Input<svg class="pl"><use href="#plus"/></svg></div>
    </div>
    <div class="grp">
      <div class="cells">
        <div class="c2"><svg viewBox="0 0 56 56"><path d="M33 12c-4 8-8 14-14 20M35 12c2 8 4 16 3 24" stroke="#6a3018" stroke-width="2.500" fill="none"/><path d="M15 21c2-10 10-14 20-12-4 10-12 12-20 12z" fill="#5a9a30" stroke="#305010"/><circle cx="17" cy="37" r="9.500" fill="url(#gCherry)"/><circle cx="37" cy="42" r="9.500" fill="url(#gCherry)"/></svg><svg viewBox="0 0 56 56"><rect x="5" y="5" width="46" height="46" rx="4" fill="url(#gGrey)" stroke="#111" stroke-width="2.500"/><path d="M5 45h46v5H5z"/><path d="M28 46V30M28 36l-11-9M28 34l11-9M28 30l-5-13M28 30l6-13" stroke="#000" stroke-width="2.500"/><path d="M17 27l-5-6M17 27l-7 2M39 25l4-7M39 25l7 3M23 17l-7-3M34 17l7-4M12 13l4 5 6-8 5 9 5-9 4 7 8-5-3 9 5 5M9 24l6-2 6 4 7-7 7 6 8-4M14 17l6 5 4-2 8 1 6 0" stroke="#000" stroke-width="1.300" fill="none"/></svg></div><hr>
        <div class="c2"><svg viewBox="0 0 56 56"><path d="M9 22h17v-12l22 18-22 18V35H9z" fill="url(#gDark)" stroke="#222" stroke-width="2.500"/></svg><svg viewBox="0 0 56 56"><path d="M9 22h17v-12l22 18-22 18V35H9z" fill="#e4e4e4" stroke="#555" stroke-width="2.500"/></svg></div><hr>
        <div class="c2"><svg viewBox="0 0 56 56"><ellipse cx="24" cy="24" rx="13" ry="17" transform="rotate(25 24 24)" fill="#bbb" stroke="#555" stroke-width="1.500"/><circle cx="24" cy="25" r="4" fill="#333"/><ellipse cx="36" cy="36" rx="11" ry="15" transform="rotate(25 36 36)" fill="#c84880" stroke="#701838" stroke-width="1.500"/><circle cx="34" cy="36" r="4" fill="#901040"/></svg><svg viewBox="0 0 56 56"><path d="M22 9h8v16l10 20c1 4-2 6-14 6s-15-2-14-6l10-20z" fill="#eedde4" stroke="#703050" stroke-width="2"/><path d="M19 30h14l7 16c-2 5-26 5-28 0z" fill="#c83870"/></svg></div>
      </div>
      <div class="cap">Util<svg class="pl"><use href="#plus"/></svg></div>
    </div>
    <div class="grp last">
      <div class="cells">
        <div class="c2"><svg viewBox="0 0 56 56"><ellipse cx="37" cy="14" rx="10.500" ry="7" transform="rotate(8 37 14)"/><ellipse cx="20" cy="22" rx="12" ry="7" transform="rotate(18 20 22)"/><path d="M21 33l10 3-13 16H8zM34 27l9 7 5 17-8 1-7-16z" stroke="#000" stroke-linejoin="round" stroke-width="2"/></svg><svg viewBox="0 0 56 56" fill="none" stroke="#222" stroke-width="2.500"><path d="M11 49c0-18 14-37 34-39M21 49c0-13 10-25 24-27M31 49c0-7 6-14 14-15"/></svg></div><hr>
        <div class="c2"><svg viewBox="0 0 56 56"><path d="M12 8l32 7-1 8-13-2-5 29-9-2 6-28-11-3z" fill="none" stroke="#222" stroke-width="2.500"/></svg></div><hr>
        <div class="c2"><svg viewBox="0 0 56 56"><path d="M8 18c0-6 3-10 7-10l40 20v24L14 41 8 24zM20 10c2 8-6 16-12 13M20 20L54 40" fill="none" stroke="#222" stroke-width="2.500"/></svg></div>
      </div>
      <div class="cap o">Other</div>
    </div>
  </div>
  <div class="g-bar">
    <button class="sq"><svg viewBox="0 0 40 40"><path d="M12 20V6h8l8 4v12z" fill="#e8e8e8" stroke="#888" stroke-width="1.500"/><path d="M7 36V19h9l3-5h14v22z" fill="#7cc440" stroke="#4a8a20" stroke-width="1.500"/></svg></button>
    <button class="sq"><svg viewBox="0 0 40 40"><path d="M4 4h32v32H7l-3-3z" fill="#3a68c8" stroke="#1a3888" stroke-width="1.500"/><path d="M10 5h20v13H10z" fill="#eee"/><path d="M11 24h18v12H11z" fill="#a8b8d8"/><path d="M14 26h6v9h-6z" fill="#123"/></svg></button>
    <hr>
    <div class="combo">71%<i><svg viewBox="0 0 32 32"><path d="M10 13l6 7 6-7" fill="none" stroke="#fff" stroke-width="3.500" stroke-linecap="round"/></svg></i></div>
    <button class="w1"><svg viewBox="0 0 40 40" fill="none" stroke="#222" stroke-width="6"><path d="M5 16V6h11M24 6h11v10M35 25v10H24M16 35H5V25"/><path d="M17 17l6 6M23 17l-6 6" stroke-width="2.500"/></svg></button>
    <button class="w2"><svg viewBox="0 0 40 40"><path d="M4 20c6-11 26-11 32 0-6 11-26 11-32 0z" fill="#fff" stroke="#444" stroke-width="2.200"/><circle cx="20" cy="20" r="8.500" fill="#6ab4dc"/><circle cx="20" cy="20" r="3.500" fill="#012"/></svg></button>
    <button class="w3"><svg viewBox="0 0 40 40"><path d="M8 22c-6 5-1 8 1 11 4 5 12 1 16-4l-6-5c-2 6-6 9-9 7-2-2 1-5-2-9z" fill="#6a2820"/><path d="M18 24L36 4c3 10-1 20-10 26z" fill="#e04838"/><path d="M17 23l9 7-3 3-7-5z" fill="#e8b040"/></svg></button>
    <button class="sq r1"><svg viewBox="0 0 40 40"><path d="M9 28c0 10 22 10 22 0" fill="#999"/><path d="M20 3l11 11-3 12H12L9 14z" fill="#ccc" stroke="#888"/><path d="M20 5l-4 9 8 10" fill="none" stroke="#fff" stroke-width="3"/><ellipse cx="20" cy="27" rx="11" ry="6.500" fill="#222"/></svg></button>
    <button class="sq r2"><svg viewBox="0 0 40 40"><circle cx="20" cy="20" r="13" fill="#888" stroke="#444" stroke-width="3"/></svg></button>
  </div>
  <div class="canvas">
    <div class="beyond"></div>
    <svg class="wires" viewBox="1816 330 1228 1382" fill="none">
      <defs><linearGradient id="wg" x1="0" y1="0" x2="1" y2="1"><stop offset="0" stop-color="#8fcf3c"/><stop offset=".25" stop-color="#8ab650"/><stop offset="1" stop-color="#8d937c"/></linearGradient><linearGradient id="wr" gradientUnits="userSpaceOnUse" x1="450" y1="0" x2="640" y2="0"><stop offset="0" stop-color="#8fc84c"/><stop offset=".5" stop-color="#8d957c"/><stop offset="1" stop-color="#a3a39c"/></linearGradient></defs>
      <g transform="translate(2000 640) scale(.5612 .3571)" stroke="#555450" stroke-width="4">
        <path d="M442 655C500 655.500 580 655.500 640 655" stroke="url(#wr)"/>
        <path d="M442 655C800 655 850 1000 1104 1170" stroke="url(#wg)"/>
        <path d="M468 500C560 500 540 575 636 575M468 500C540 500 590 508 644 530"/>
        <path d="M788 615C960 615 900 232 1070 232M788 615C930 615 930 655 1098 655M788 615C860 650 900 734 1098 734M802 951C950 951 950 813 1098 813"/>
        <path d="M1248 1246C1290 1258 1320 1266 1375 1266" stroke="#a5a59b"/>
        <path d="M1250 1314C1320 1314 1310 1188 1375 1188" stroke-width="7"/>
      </g>
      <g class="ports">
        <circle cx="2603" cy="723" r="5"/><circle cx="2831" cy="723" r="5"/>
        <circle cx="2189" cy="818.500" r="5"/><circle cx="2261" cy="818.500" r="5"/>
        <circle cx="2247" cy="874" r="5"/><circle cx="2447" cy="979.500" r="5"/>
        <circle cx="2360" cy="845.500" r="5"/><circle cx="2360" cy="874" r="5"/><circle cx="2438" cy="859.500" r="5"/>
        <circle cx="2619" cy="874" r="5"/><circle cx="2619" cy="902" r="5"/><circle cx="2619" cy="930.500" r="5"/><circle cx="2701" cy="881" r="5"/><circle cx="2701" cy="923" r="5"/>
        <circle cx="2619" cy="1067" r="5"/><circle cx="2619" cy="1095" r="5"/><circle cx="2619" cy="1123.500" r="5"/><circle cx="2619" cy="1152" r="5"/><circle cx="2700" cy="1109.500" r="5"/>
        <circle cx="2774" cy="1064.500" r="5"/><circle cx="2774" cy="1092.500" r="5"/><circle cx="2774" cy="1121" r="5"/><circle cx="2774" cy="1149" r="5"/><circle cx="2858" cy="1106.500" r="5"/>
      </g>
    </svg>
    <div class="node panel"><div class="ph">{0}</div><div class="pr"><i>0</i><u>&lt;null&gt;</u></div></div>
    <div class="node pt">Pt</div>
    <div class="node slider radius"><b>Radius</b><div><svg viewBox="0 0 168 28"><path d="M14 14.500h142M14 6v9M28 9v6M42 9v6M56 9v6M70 9v6M84 6v9M99 9v6M113 9v6M127 9v6M141 9v6M156 6v9" stroke="#7fb347" stroke-width="1.500"/></svg><span><i></i>2.841</span></div></div>
    <div class="node slider factor"><b>Factor</b><div><svg viewBox="0 0 168 28"><path d="M14 14.500h142M14 6v9M28 9v6M42 9v6M56 9v6M70 9v6M84 6v9M99 9v6M113 9v6M127 9v6M141 9v6M156 6v9" stroke="#b5b5b5" stroke-width="1.500"/></svg><span><i></i>1.447</span></div></div>
    <div class="node comp sph"><div class="in"><span>B</span><span>R</span></div><em><b>Sph</b></em><div class="out"><span>S</span></div></div>
    <div class="node comp scale"><div class="in"><span>G</span><span>C</span><span>F</span></div><em><b>Scale</b></em><div class="out"><span>G</span><span>X</span></div></div>
    <div class="node comp pop"><div class="in"><span>R</span><span>N</span><span>S</span><span>P</span></div><em><b>Pop2D</b></em><div class="out"><span>P</span></div></div>
    <div class="node comp msph"><div class="in"><span>B</span><span>R</span><span>U</span><span>V</span></div><em><b>MSphere</b></em><div class="out"><span>M</span></div></div>
    <div class="scrap"></div>
  </div>
  <footer class="g-status"><svg viewBox="0 0 34 34"><circle cx="17" cy="17" r="15.500" fill="#38a8d0" stroke="#102080" stroke-width="3"/><rect x="13" y="7" width="8" height="16" rx="4" fill="#dff" stroke="#123070" stroke-width="2.500"/></svg><span>Autosave complete (8 seconds ago)</span></footer>
</section>
<script src="grid.js"></script>
</body>
</html>
```
FILE: grid.js
```js
// Construction plane grid: each line is given by its height at the two sides of the viewport.
const L = 318, R = 1818;
const famA = i => [1100 - 1764 / (i + 1.33), 1103 - 905.6 / (i + 1.315)];
const famB = j => [1104 - 1325 / (j + 1.457), 1102 - 1901 / (j + 1.44)];
let major = "", minor = "";
function add(fam, from, to) {
  for (let n = from * 5; n <= to * 5; n++) {
    const [a, b] = fam(n / 5);
    if (n / 5 < -1.2) continue;
    const d = `M${L} ${a.toFixed(1)}L${R - 6} ${b.toFixed(1)}`;
    if (n % 5 === 0) major += d; else minor += d;
  }
}
add(famA, -1, 22);
add(famB, -1, 26);
document.getElementById("major").setAttribute("d", major);
document.getElementById("minor").setAttribute("d", minor);
```
FILE: styles.css
```css
* { box-sizing: border-box; }
body { margin: 0; width: 3044px; height: 1738px; overflow: hidden; position: relative; font-family: Inter, "Liberation Sans", sans-serif; color: #262626; }
h1, h2, hr { margin: 0; font-weight: normal; border: 0; }
i, em { font-style: normal; }
svg { display: block; flex: none; }
.defs { position: absolute; }

.rhino { width: 3044px; height: 1738px; display: flex; flex-direction: column; background: #e9e9eb; }
.r-title { position: relative; height: 108px; background: #e8e8ea; }
.lights { display: flex; gap: 16px; padding: 8px 0 0 12px; height: 40px; }
.lights i { width: 24px; height: 24px; border-radius: 50%; border: 1px solid rgba(0,0,0,.12); }
.lights.off i { background: #d0d0d1; border: 1px solid #b4b4b5; }
.lights.off .dot { background: radial-gradient(circle, #555 0 4px, #d0d0d1 5px); }
.lights .red { background: #ec6a5e; }
.lights .yel { background: #f4bf4f; }
.lights .grn { background: #61c554; }
.doc { position: absolute; left: 1354px; top: 2px; font-size: 25.500px; line-height: 32px; letter-spacing: .6px; color: #cdcdce; white-space: pre; font-weight: 500; }
.doc b { color: #a8a8a9; }
.r-tools { display: flex; align-items: center; height: 64px; padding-left: 20px; position: relative; }
.side { width: 40px; height: 40px; margin-right: 89px; }
.opt { font-weight: 600; font-size: 24.600px; color: #b0b0b1; height: 30px; line-height: 29px; border-radius: 6px; display: flex; justify-content: center; white-space: nowrap; }
.opt.on { background: #c7c7c8; color: #adadae; }
.gs { width: 161px; } .or { width: 120px; margin-left: 18px; } .pl { width: 72px; }
.opt.pl { margin-left: 40px; color: #b0b0b1; width: 76px; }
.st { width: 142px; margin-left: 57px; } .gu { width: 100px; margin-left: 59px; } .hi { width: 90px; margin-left: 60px; }
.filters { width: 180px; height: 46px; margin-left: 578px; }
.tooltip { position: absolute; left: 258px; top: 42px; width: 308px; height: 38px; line-height: 35px; text-align: center; font-size: 22.300px; color: #3f3f3f; background: #dfdfdf; border: 1px solid #cfcfcf; box-shadow: 0 4px 20px rgba(0,0,0,.25); white-space: nowrap; }
.r-tabs { height: 34px; display: flex; background: #e2e2e2; border-top: 2px solid #7e7e7e; padding-left: 9px; }
.r-tabs span { height: 32px; border-bottom: 1.500px solid #8a8a8a; border-right: 1.500px solid #8a8a8a; border-radius: 0 8px 0 5px; text-align: center; font-size: 18.200px; font-weight: 600; line-height: 27px; color: #aeaeae; white-space: nowrap; background: #e6e6e6; }
.r-tabs .act { background: #ebebeb; border-left: 1.500px solid #8a8a8a; border-bottom-color: #ebebeb; border-radius: 8px 8px 0 0; }
.r-icons { height: 62px; display: flex; padding-left: 0; background: #ebebeb; border-bottom: 2px solid #d2d2d2; overflow: hidden; }
.r-icons > svg, .wheel { width: 60px; height: 60px; flex: none; }
.r-icons > svg:first-child { margin-left: -4px; }
.pressed { background: #f4f4f4; border: 2px solid #a9a9a9; }
.wheel { display: flex; padding: 12px 10px 0 11px; }
.wheel i { width: 38px; height: 38px; border-radius: 50%; border: 1.500px solid #222; background: radial-gradient(circle, #f4f4f4 0 9px, #222 9.500px 10px, transparent 10.500px), conic-gradient(red, #ff0 60deg, #0d0 120deg, #0dd 180deg, #22f 240deg, #d0d 300deg, red); }

.r-work { flex: 1; display: flex; min-height: 0; }
.r-left { width: 318px; border-right: 2px solid #808080; background: #ececee; display: flex; flex-direction: column; }
.left-cap { height: 51px; background: linear-gradient(#fbfbfb, #e0e0e0); border-bottom: 2px solid #c8c8c8; }
.command { margin: 22px 0 0 13px; width: 286px; height: 41px; background: #fff; border: 1px solid #d4d4d4; border-bottom: 2px solid #b8b8b8; font-size: 25px; line-height: 37px; color: #bdbdbd; padding-left: 6px; }
.palette { display: grid; grid-template-columns: repeat(5, 60px); grid-auto-rows: 60px; margin: 14px 0 0 -4px; }
.palette svg { width: 60px; height: 60px; }
.snaps { margin-top: 9px; border-top: 3px solid #808080; padding-top: 10px; font-size: 22px; letter-spacing: .1px; }
.snaps label { display: flex; align-items: center; height: 40px; padding-left: 36px; gap: 8px; color: #202020; white-space: nowrap; }
.snaps label.radio { height: 30px; padding-left: 32px; }
.snaps label i { width: 24px; height: 24px; border-radius: 5px; background: #fff; border: 1px solid #cbcbcb; border-top-color: #b8b8b8; }
.snaps label.radio i { border-radius: 50%; }
.snaps label.sel i { background: radial-gradient(circle, #222 0 4px, #fff 5px); }
.checks { padding-top: 6px; }
.snaps .dim { color: #b2b2b4; }
.snaps .dim i { background: #f3f3f4; border-color: #d8d8d8; }
.snaps .all { margin-top: 36px; }

.r-view { flex: 1; display: flex; flex-direction: column; min-width: 0; }
.v-bar { height: 52px; background: linear-gradient(#fafafa, #e0e0e0); border-bottom: 3px solid #6e6e6e; display: flex; align-items: center; padding-left: 19px; font-size: 25.300px; color: #5e5e5e; }
.v4, .v1 { width: 32px; height: 30px; }
.v1 { margin-left: 32px; }
.v-bar hr { width: 2px; height: 28px; background: #777; margin: 2px 0 0 27px; }
.v-bar hr ~ hr { margin-left: 0; }
.v-bar span { width: 122px; text-align: center; height: 34px; line-height: 29px; padding-right: 2px; }
.v-bar .cur { width: 220px; color: #1f6bea; }
.v-bar span:nth-of-type(3) { width: 142px; }
.v-bar span:nth-of-type(4) { width: 142px; }
.v-bar span:nth-of-type(5) { width: 194px; }
.scene { position: relative; flex: 1; background: #9da1a9; overflow: hidden; }
.scene-svg { width: 1500px; height: 1436px; }
.axis text { font-size: 26px; fill: #5c5f63; }
.v-label { position: absolute; left: 2px; top: 2px; width: 160px; height: 38px; background: #8d8e90; color: #fff; font-weight: 700; font-size: 24px; line-height: 37px; text-align: center; padding-right: 2px; }
.r-status { height: 46px; background: linear-gradient(#d9d9d9, #cdcdcd); display: flex; align-items: center; padding: 12px 0 0 6px; font-size: 22px; letter-spacing: -.05px; color: #1c1c1c; white-space: nowrap; }
.r-status > svg { width: 28px; height: 24px; margin-right: 4px; }
.r-status .spark { width: 28px; height: 28px; margin: 0 0 0 2px; }

.gh { position: absolute; left: 1815px; top: 0; width: 1229px; height: 1738px; background: #ebebeb; border-radius: 20px 0 0 0; overflow: visible; box-shadow: 0 10px 90px rgba(0,0,0,.55), 0 0 0 1px #8a8a90; display: flex; flex-direction: column; }
.g-title { height: 49px; background: #f3f2f7; border-bottom: 1px solid #c6c6c6; border-radius: 20px 0 0 0; position: relative; }
.g-title .lights { padding-left: 15px; }
.g-title h2 { position: absolute; left: 681px; top: 2px; font-weight: 700; font-size: 26.200px; line-height: 32px; color: #454545; white-space: nowrap; }
.g-tabs { height: 44px; display: flex; font-family: "Liberation Sans", Arial, sans-serif; font-size: 23px; color: #757575; overflow: hidden; border-bottom: 2px solid #a4a4a4; gap: 25px; align-items: center; }
.g-tabs span { white-space: nowrap; line-height: 44px; height: 40px; }
.g-tabs b { font-weight: 400; color: #111; height: 44px; line-height: 38px; width: 104px; text-align: center; background: linear-gradient(#fff 30%, #dedede); border: 1.500px solid #8f8f8f; border-bottom: 0; border-radius: 12px 12px 0 0; margin-right: -13px; padding-right: 3px; flex: none; }
.g-ribbon { height: 177px; padding: 5px 0 0 5px; display: flex; gap: 8px; overflow: hidden; background: linear-gradient(#dedede, #ebebeb 80%); border-bottom: 2px solid #d2d2d6; font-family: "Liberation Sans", Arial, sans-serif; }
.grp { height: 145px; border: 2px solid #8a8a8a; border-radius: 8px; background: linear-gradient(#dcdcdc, #e9e9e9); padding: 1px 2px 0; flex: none; overflow: hidden; }
.cells { display: flex; height: 114px; }
.cells hr { width: 20px; background: linear-gradient(#bbb, #bbb) center 6px / 1.500px 100px no-repeat; }
.c2 { width: 56px; }
.c2 svg { width: 56px; height: 56px; }
.cap { position: relative; margin: 0 -4px; height: 30px; background: linear-gradient(#3a3a3a, #1e1e1e); color: #dedede; text-align: center; font-size: 22px; line-height: 24px; padding-right: 16px; }
.cap .pl { position: absolute; right: 5px; top: 7px; width: 14px; height: 14px; }
.cap.o { padding-left: 107px; }
.grp.last { width: 320px; }
.gt { font: 700 35px "Liberation Sans", sans-serif; fill: #fff; text-anchor: middle; }
.gt.sm { font: 400 31px "Liberation Serif", serif; letter-spacing: -2px; }
.gt.se { font: 700 36px "Liberation Serif", serif; }
.g-bar { height: 60px; background: #eeedf2; display: flex; align-items: center; padding-left: 1px; overflow: hidden; flex: none; }
.g-bar button { height: 40px; border: 0; padding: 0; border-radius: 9px; background: #fff; box-shadow: 0 1px 3px rgba(0,0,0,.35); display: flex; justify-content: center; align-items: center; flex: none; }
.g-bar button svg { width: 34px; height: 36px; }
.g-bar .sq { width: 52px; margin-right: 4px; }
.g-bar hr { width: 2px; height: 32px; background: #d4d4d8; margin: 0 10px 0 4px; flex: none; }
.combo { width: 118px; height: 40px; background: #fff; border-radius: 9px; box-shadow: 0 1px 3px rgba(0,0,0,.35); display: flex; flex: none; align-items: center; justify-content: space-between; padding: 0 4px 0 7px; font-size: 24px; color: #222; letter-spacing: -.5px; }
.combo i { width: 32px; height: 32px; border-radius: 7px; background: linear-gradient(#4a93f8, #2f76f0); }
.w1 { width: 64px; margin-left: 6px; } .w2 { width: 64px; margin-left: 22px; } .w3 { width: 53px; margin-left: 20px; }
.g-bar .r1 { margin-left: 683px; } .g-bar .r2 { margin-left: -2px; }
.canvas { position: relative; margin-left: 1px; height: 1382px; flex: none; overflow: hidden; background-color: #dcd9d2; background-image: linear-gradient(90deg, #bebcb6 2px, transparent 2px), linear-gradient(#bebcb6 2px, transparent 2px); background-size: 211.600px 100%, 100% 70.620px; background-position: 185px 0, 0 48.500px; }
.beyond { height: 122px; border-bottom: 4px solid #000; background: linear-gradient(transparent 66%, rgba(60,60,55,.3) 82%, rgba(50,50,48,.5)), repeating-linear-gradient(128deg, rgba(150,150,135,.2) 0 3px, rgba(150,150,135,.02) 3px 6px); }
.wires { position: absolute; left: 0; top: 0; width: 1228px; height: 1382px; }
.wires path { vector-effect: non-scaling-stroke; }
.ports circle { fill: #fff; stroke: #000; stroke-width: 2.500; }
.node { position: absolute; border: 1.500px solid #333; border-radius: 4px; font-size: 14px; color: #111; background: linear-gradient(#ececec, #cfcfcf); box-shadow: 0 1px 2px rgba(0,0,0,.3); }
.panel { left: 788px; top: 329px; width: 227px; height: 129px; background: linear-gradient(90deg, transparent 11px, #d6cf70 11px 12px, transparent 12px), #fff582; font-family: "Liberation Mono", monospace; font-size: 11px; }
.ph { height: 24px; background: rgba(200,195,100,.5); text-align: right; padding: 5px 14px 0 0; color: #77733a; }
.pr { padding: 5px 0 0 2px; display: flex; gap: 4px; color: #77733a; }
.pr u { color: #c9c26a; text-decoration: none; }
.pt { left: 373.500px; top: 474px; width: 71px; height: 29px; border-color: #7a2c10; background: linear-gradient(#f6b455, #f09f3e); text-align: center; line-height: 28px; padding-right: 2px; }
.slider { display: flex; height: 29px; width: 229px; overflow: hidden; }
.slider b { font-weight: 400; width: 60px; text-align: center; line-height: 28px; border-right: 1.500px solid #333; }
.slider div { flex: 1; position: relative; }
.slider svg { position: absolute; left: 0; top: 0; width: 168px; height: 28px; }
.slider span { position: absolute; top: 3px; height: 22px; line-height: 22px; display: flex; align-items: center; gap: 2px; padding-right: 6px; font-size: 14.500px; }
.slider i { width: 12px; height: 12px; border: 3px solid #000; border-radius: 50%; background: #fff; }
.radius { left: 201px; top: 529px; border-color: #1f4a10; background: linear-gradient(#bdf07a, #9ed65a); }
.radius b { background: linear-gradient(#88cc4a, #74b436); border-color: #1f4a10; }
.radius span { left: 11px; background: #afe56a; }
.factor { left: 404.500px; top: 635px; width: 227px; }
.factor b { width: 57px; background: linear-gradient(#b4b2c0, #9c9aa8); }
.factor span { left: 48px; background: #dedede; padding-right: 0; }
.comp { display: flex; justify-content: space-between; padding: 2px 0; }
.comp .in, .comp .out { width: 20px; display: flex; flex-direction: column; justify-content: space-around; text-align: center; line-height: 16px; padding: 2px 0; font-size: 14px; }
.comp .out { padding-right: 2px; }
.comp em { width: 35px; background: linear-gradient(#5c5c5c, #3e3e3e); border: 1.500px solid #000; border-radius: 4px; display: flex; align-items: center; justify-content: center; }
.comp em b { writing-mode: vertical-rl; transform: rotate(180deg); color: #fff; font-size: 18.500px; line-height: 22px; font-weight: 800; white-space: nowrap; padding-left: 2px; }
.sph { left: 544px; top: 498px; width: 78px; height: 63px; }
.scale { left: 803.500px; top: 526px; width: 81px; height: 92px; }
.pop { left: 803.500px; top: 720px; width: 80px; height: 119px; }
.msph { left: 959px; top: 717px; width: 82px; height: 119px; }
.scrap { position: absolute; left: -4px; bottom: 0; width: 18px; height: 57px; border: 2.500px solid #000; border-radius: 3px; background: linear-gradient(#d8d8d8 0, #bbb 38%, #8c8c8c 40%, #989898); }
.g-status { flex: 1; min-height: 0; background: #e9e8ed; border-top: 2px solid #cfced6; overflow: hidden; display: flex; padding-left: 2px; gap: 4px; font-size: 24px; line-height: 28px; letter-spacing: -.05px; white-space: nowrap; }
.g-status svg { width: 34px; height: 34px; margin-top: 5px; }
.g-status span { padding-top: 5px; }
```
